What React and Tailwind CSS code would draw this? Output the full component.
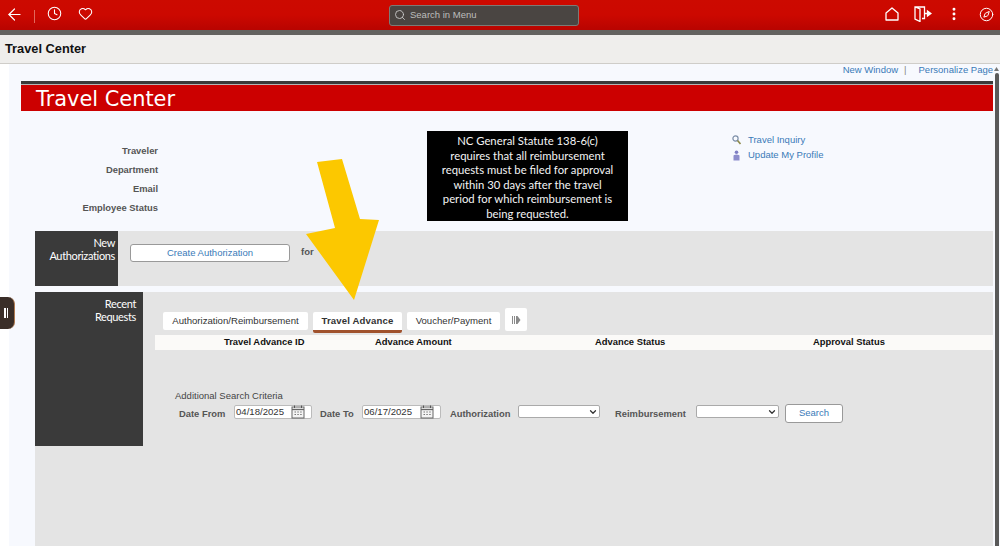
import React from "react";
import { ArrowLeft, Clock, Heart, Search, MoreVertical, Compass, ChevronDown } from "lucide-react";

const F = "font-['Liberation_Sans',Arial,sans-serif]";

function HomeIcon() {
  return (
    <svg width="14" height="14" viewBox="0 0 14 14" fill="none" stroke="white" strokeWidth="1.3">
      <path d="M1 6L7 1L13 6V13H1Z" strokeLinejoin="round" />
    </svg>
  );
}

function DoorIcon() {
  return (
    <svg width="18" height="16" viewBox="0 0 18 16" fill="none" stroke="white" strokeWidth="1.3">
      <path d="M8 12.5H10.5V1H1V13L6 15.5V3L1 1" />
      <path d="M10.5 7.5H13.5V5L17 7.5L13.5 10V7.5" fill="white" />
    </svg>
  );
}

function Calendar() {
  return (
    <svg width="14" height="14" viewBox="0 0 14 14" fill="none" className="shrink-0">
      <rect x="1" y="2" width="12" height="11" fill="#f4f4f4" stroke="#666" />
      <path d="M1 4.5H13" stroke="#666" strokeWidth="1.3" />
      <path d="M3.5 0.5V3M10.5 0.5V3" stroke="#555" />
      <path d="M3.5 7H5M6.3 7H7.8M9.2 7H10.7M3.5 9.5H5M6.3 9.5H7.8M9.2 9.5H10.7" stroke="#777" />
    </svg>
  );
}

function DateField({ value, w }) {
  return (
    <div className={`${w} h-[14px] flex items-center justify-between bg-white border border-[#bbb] rounded-[2px] pl-[1px] pr-[6px] text-[9.6px] text-[#333]`}>
      <span>{value}</span>
      <Calendar />
    </div>
  );
}

function SelectField({ w }) {
  return (
    <div className={`${w} h-[13px] flex items-center justify-end bg-white border border-[#aaa] rounded-[2px] pr-[1px]`}>
      <ChevronDown size={10} strokeWidth={3} color="#333" />
    </div>
  );
}

function Tab({ children, active, w }) {
  return (
    <div className={`${w} flex items-center justify-center text-[9.6px] rounded-[2px] bg-white ${active ? "h-[21px] border-b-[3px] border-[#a0522d] font-bold text-[#333] tracking-[0.15px]" : "h-[18px] text-[#333]"}`}>
      {children}
    </div>
  );
}

function InfoLabel({ children }) {
  return <div className="h-[19px] flex items-center justify-end text-[9.4px] font-bold text-[#555]">{children}</div>;
}

function FieldLabel({ children, className }) {
  return <span className={`h-[20px] leading-[20px] ${className}`}>{children}</span>;
}

export default function App() {
  return (
    <div className={`${F} relative w-[1000px] h-[546px] overflow-hidden flex flex-col bg-white`}>
      <header className="h-[30px] shrink-0 flex items-center justify-between bg-gradient-to-b from-[#cc0a00] via-[#cc0800] to-[#b80400] pl-[5px] pr-[6px]">
        <div className="flex items-center">
          <ArrowLeft size={19} color="white" strokeWidth={1.5} className="-mt-[2px]" />
          <div className="w-px h-[13px] bg-[#e2685c] ml-[10px] mr-[12px] mt-[2px]" />
          <Clock size={15} color="white" strokeWidth={1.7} className="-mt-[3px]" />
          <Heart size={15} color="white" strokeWidth={1.7} className="ml-[16px] -mt-[3px]" />
        </div>
        <div className="w-[190px] h-[21px] mr-[10px] flex items-center gap-[4px] pl-[4px] bg-[#4a4542] border border-[#7c7a76] rounded-[3px]">
          <Search size={12} color="#c8c8c8" strokeWidth={1.8} />
          <span className="text-[9.5px] text-[#bdbdbd]">Search in Menu</span>
        </div>
        <div className="flex items-center -mt-[2px]">
          <HomeIcon />
          <div className="ml-[15px]"><DoorIcon /></div>
          <MoreVertical size={16} color="white" strokeWidth={2.4} className="ml-[14px]" />
          <Compass size={15} color="white" strokeWidth={1.6} className="ml-[17px]" />
        </div>
      </header>
      <div className="h-[5px] shrink-0 bg-[#646360]" />
      <div className="h-[29px] shrink-0 flex items-center pl-[5px] bg-[#efeeec] border-b border-[#cfcdc9] text-[12.8px] font-bold text-[#111]">
        Travel Center
      </div>

      <div className="flex-1 min-h-0 flex pl-[9px]">
        <main className="flex-1 min-w-0 bg-[#f7f9fe] pl-[12px] flex flex-col">
          <div className="h-[17px] shrink-0 flex items-start justify-end text-[9.5px] leading-[11px] text-[#3a7ab8]">
            <span>New Window</span>
            <span className="ml-[6px] mr-[12px] text-[#888]">|</span>
            <span>Personalize Page</span>
          </div>
          <div className="h-[3px] shrink-0 bg-[#3a3a3a]" />
          <div className="h-[1px] shrink-0 bg-[#b5b5b5]" />
          <div className="h-[26px] shrink-0 flex items-center pl-[15px] pt-[3px] bg-[#cc0000] text-white font-['DejaVu_Sans',sans-serif] text-[20.9px]">
            Travel Center
          </div>

          <section className="h-[120px] shrink-0 flex">
            <div className="w-[137px] pt-[31px] shrink-0">
              <InfoLabel>Traveler</InfoLabel>
              <InfoLabel>Department</InfoLabel>
              <InfoLabel>Email</InfoLabel>
              <InfoLabel>Employee Status</InfoLabel>
            </div>
            <div className="ml-[269px] mt-[20px] w-[201px] h-[90px] shrink-0 bg-black text-[#f4f4f4] text-center font-['Lato',sans-serif] text-[11.3px] leading-[14.6px] pt-[3px]">
              NC General Statute 138-6(c)<br />
              requires that all reimbursement<br />
              requests must be filed for approval<br />
              within 30 days after the travel<br />
              period for which reimbursement is<br />
              being requested.
            </div>
            <div className="ml-[104px] mt-[21px] text-[9.5px] text-[#3a7ab8]">
              <div className="h-[15.5px] flex items-center gap-[7px]">
                <svg width="9" height="10" viewBox="0 0 9 10" fill="none"><circle cx="3.5" cy="3.5" r="2.6" stroke="#7d8fa8" strokeWidth="1.2" /><path d="M5.5 5.5L8.5 9" stroke="#8d8a4a" strokeWidth="1.6" /></svg>
                <span>Travel Inquiry</span>
              </div>
              <div className="h-[15.5px] flex items-center gap-[7px]">
                <svg width="9" height="11" viewBox="0 0 9 11"><circle cx="4.5" cy="2.2" r="1.8" fill="#7f7fc4" /><path d="M1.5 10.5V6Q1.5 4.5 4.5 4.5T7.5 6V10.5Z" fill="#8d8dcc" /></svg>
                <span>Update My Profile</span>
              </div>
            </div>
          </section>

          <section className="h-[55px] shrink-0 flex bg-[#e4e4e4]">
            <div className="w-[14px] shrink-0 bg-[#f7f9fe]" />
            <div className="w-[83px] shrink-0 bg-[#3a3a3a] text-white text-right font-['Lato',sans-serif] text-[11px] tracking-[-0.35px] leading-[12.5px] pt-[6px] pr-[3px]">
              New<br />Authorizations
            </div>
            <div className="ml-[12px] mt-[13px] w-[160px] h-[18px] flex items-center justify-center bg-white border border-[#999] rounded-[3px] text-[9.5px] text-[#3a7ab8]">
              Create Authorization
            </div>
            <span className="ml-[11px] mt-[15px] text-[9.5px] leading-[12px] font-bold text-[#555]">for</span>
          </section>

          <div className="h-[6px] shrink-0" />

          <section className="flex-1 min-h-0 flex bg-[#e4e4e4] ml-[14px]">
            <div className="w-[108px] h-[154px] shrink-0 bg-[#3a3a3a] text-white text-right font-['Lato',sans-serif] text-[11px] tracking-[-0.35px] leading-[12.5px] pt-[6px] pr-[7px]">
              Recent<br />Requests
            </div>
            <div className="flex-1 min-w-0">
              <div className="flex items-start gap-[5px] pl-[20px] h-[43px]">
                <div className="mt-[20px]"><Tab w="w-[145px]">Authorization/Reimbursement</Tab></div>
                <div className="mt-[20px]"><Tab w="w-[89px]" active>Travel Advance</Tab></div>
                <div className="mt-[20px]"><Tab w="w-[93px]">Voucher/Payment</Tab></div>
                <div className="mt-[16px] w-[22px] h-[23px] flex items-center justify-center bg-white rounded-[2px]">
                  <svg width="10" height="10" viewBox="0 0 10 10"><path d="M1 1H2V9H1ZM3 1H4V9H3ZM5 1H6.5L9.5 5L6.5 9H5Z" fill="#8a8a8a" /></svg>
                </div>
              </div>
              <div className="ml-[12px] h-[15px] pl-[69px] grid grid-cols-[151px_220px_218px_1fr] bg-[#fbfaf8] text-[9.4px] font-bold text-[#111] leading-[14px]">
                <span className="whitespace-nowrap">Travel Advance ID</span>
                <span className="whitespace-nowrap">Advance Amount</span>
                <span className="whitespace-nowrap">Advance Status</span>
                <span className="whitespace-nowrap">Approval Status</span>
              </div>
              <div className="pl-[32px] pt-[40px] h-[54px] text-[9.5px] leading-[12px] text-[#444]">Additional Search Criteria</div>
              <div className="pl-[36px] flex items-start text-[9.4px] font-bold text-[#555]">
                <FieldLabel className="w-[55px]">Date From</FieldLabel>
                <div className="mt-[1px] font-normal"><DateField value="04/18/2025" w="w-[78px]" /></div>
                <FieldLabel className="ml-[8px] w-[42px]">Date To</FieldLabel>
                <div className="mt-[1px] font-normal"><DateField value="06/17/2025" w="w-[79px]" /></div>
                <FieldLabel className="ml-[9px] w-[68px]">Authorization</FieldLabel>
                <div className="mt-[1px]"><SelectField w="w-[82px]" /></div>
                <FieldLabel className="ml-[15px] w-[81px]">Reimbursement</FieldLabel>
                <div className="mt-[1px]"><SelectField w="w-[83px]" /></div>
                <div className="ml-[6px] w-[58px] h-[19px] flex items-center justify-center bg-white border border-[#999] rounded-[3px] text-[9.5px] font-normal text-[#3a7ab8]">Search</div>
              </div>
            </div>
          </section>
        </main>
        <div className="w-[7px] shrink-0 flex flex-col items-center bg-[#f7f9fe]">
          <svg width="5" height="4" viewBox="0 0 5 4" className="mt-[3px]"><path d="M2.5 0L5 4H0Z" fill="#777" /></svg>
          <div className="w-[4px] flex-1 mt-[2px] rounded-t-[2px] bg-[#595959]" />
        </div>
      </div>

      <svg width="75" height="142" viewBox="0 0 75 142" className="absolute left-[306px] top-[159px]">
        <path d="M11 3L36 0L54 60L73 61L48 141L0 75L29 69Z" fill="#fcc800" />
      </svg>

      <div className="absolute left-0 top-[297px] w-[15px] h-[32px] flex items-center justify-center bg-[#3a2e28] border-r border-[#b07a50] rounded-r-[7px] gap-[1px] pr-[2px]">
        <span className="w-[1.5px] h-[10px] bg-white" />
        <span className="w-[1.5px] h-[10px] bg-white" />
      </div>
    </div>
  );
}
